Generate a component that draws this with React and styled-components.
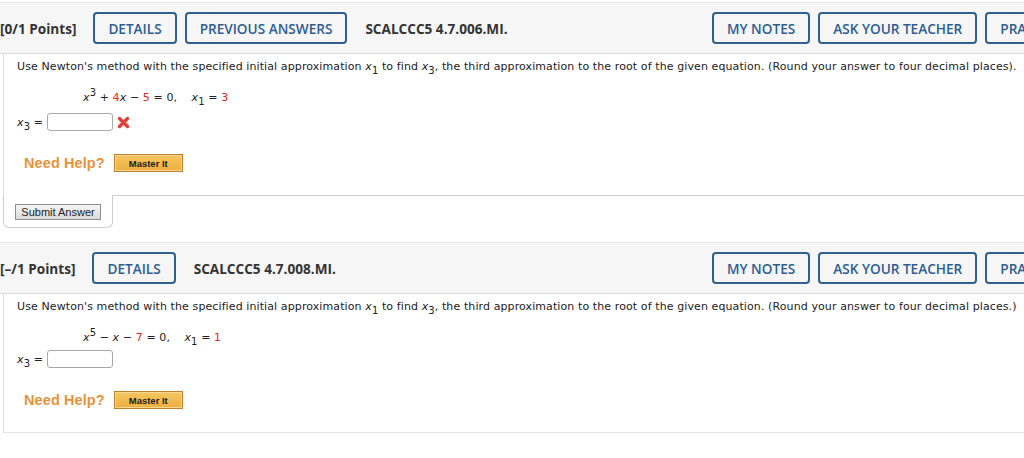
import styled, { createGlobalStyle } from "styled-components";

const GlobalStyle = createGlobalStyle`
  html, body {
    margin: 0;
    padding: 0;
    background: #fff;
    overflow: hidden;
  }
`;

const Page = styled.div`
  width: 1156px;
  padding-top: 2px;
`;

const Header = styled.div`
  display: flex;
  align-items: center;
  height: 50px;
  background: #f6f6f6;
  border-top: 1px solid #e8e8e8;
  border-bottom: 1px solid #dcdcdc;
  font-family: "Open Sans", "DejaVu Sans", sans-serif;
  gap: 8px;
  padding-right: 10px;
`;

const Points = styled.span`
  font-size: 13.6px;
  font-weight: 700;
  color: #333;
  margin-right: 9px;
  white-space: nowrap;
`;

const Title = styled.span`
  font-size: 13.6px;
  font-weight: 700;
  color: #333;
  margin-left: 10px;
  white-space: nowrap;
`;

const Spacer = styled.div`
  flex: 1;
`;

const HeaderButton = styled.button`
  height: 32px;
  padding: 0 13px;
  border: 2px solid #2f5f93;
  border-radius: 4px;
  background: transparent;
  color: #2d5d91;
  font-family: "Open Sans", "DejaVu Sans", sans-serif;
  font-size: 13.6px;
  font-weight: 600;
  white-space: nowrap;
`;

const Body = styled.div`
  margin-left: 3px;
  border-left: 1px solid #dedede;
  border-bottom: 1px solid ${({ $last }) => ($last ? "#e6e6e6" : "#cfcfcf")};
  padding: 5px 13px 22px;
  font-family: "DejaVu Sans", Verdana, sans-serif;
  font-size: 11px;
  letter-spacing: 0.1px;
  color: #222;
`;

const Prompt = styled.p`
  margin: 0;
  line-height: 16px;
  white-space: nowrap;
`;

const Equation = styled.div`
  margin-top: 14px;
  line-height: 18px;
  padding-left: 66px;
  white-space: nowrap;
`;

const V = styled.i`
  font-style: italic;
`;

const Sub = styled.sub`
  font-size: 10px;
  vertical-align: -4px;
  line-height: 0;
`;

const Sup = styled.sup`
  font-size: 10px;
  vertical-align: 5px;
  line-height: 0;
`;

const Red = styled.span`
  color: #e8251c;
`;

const AnswerRow = styled.div`
  display: flex;
  align-items: center;
  height: 20px;
  margin-top: ${({ $top }) => $top}px;
  gap: 4px;
`;

const Label = styled.span`
  white-space: nowrap;
`;

const AnswerInput = styled.input`
  width: 66px;
  height: 18px;
  box-sizing: border-box;
  border: 1px solid #a8a8a8;
  border-radius: 3px;
  background: #fff;
  margin: 0;
`;

const WrongMark = styled.svg`
  width: 13px;
  height: 13px;
`;

const HelpRow = styled.div`
  display: flex;
  align-items: center;
  height: 20px;
  margin-top: 21px;
  padding-left: 7px;
  gap: 9px;
`;

const NeedHelp = styled.span`
  font-family: "Liberation Sans", Arial, sans-serif;
  font-size: 14.5px;
  font-weight: 700;
  color: #e8923a;
  white-space: nowrap;
`;

const MasterButton = styled.button`
  width: 69px;
  height: 18px;
  padding: 0;
  border: 1px solid #c0812e;
  box-shadow: inset 0 0 0 1px #f8d88f;
  background: linear-gradient(#f6c762, #eeae3f);
  color: #1c1c1c;
  font-family: "Liberation Sans", Arial, sans-serif;
  font-size: 9.5px;
  font-weight: 700;
`;

const SubmitTab = styled.div`
  width: 86px;
  margin-left: 3px;
  margin-top: -1px;
  padding: 9px 11px 7px;
  background: #fff;
  border: 1px solid #cfcfcf;
  border-top: none;
  border-radius: 0 0 6px 6px;
`;

const SubmitButton = styled.button`
  width: 86px;
  height: 16px;
  padding: 0;
  border: 1px solid #8e8e8e;
  background: linear-gradient(#f6f6f6, #dadada);
  color: #222;
  font-family: "Liberation Sans", Arial, sans-serif;
  font-size: 11px;
  display: block;
`;

const Section = styled.section`
  margin-bottom: 14px;
`;

const Cross = () => (
  <WrongMark viewBox="0 0 13 13">
    <path
      d="M2.5 2.5 L10.5 10.5 M10.5 2.5 L2.5 10.5"
      stroke="#e2403b"
      strokeWidth="3.4"
      strokeLinecap="round"
    />
  </WrongMark>
);

const PromptText = ({ end }) => (
  <Prompt>
    Use Newton's method with the specified initial approximation <V>x</V>
    <Sub>1</Sub> to find <V>x</V>
    <Sub>3</Sub>, the third approximation to the root of the given equation.
    (Round your answer to four decimal places{end}
  </Prompt>
);

const QuestionHeader = ({ points, title, previous }) => (
  <Header>
    <Points>{points}</Points>
    <HeaderButton>DETAILS</HeaderButton>
    {previous && <HeaderButton>PREVIOUS ANSWERS</HeaderButton>}
    <Title>{title}</Title>
    <Spacer />
    <HeaderButton>MY NOTES</HeaderButton>
    <HeaderButton>ASK YOUR TEACHER</HeaderButton>
    <HeaderButton>PRACTICE ANOTHER</HeaderButton>
  </Header>
);

const HelpLine = () => (
  <HelpRow>
    <NeedHelp>Need Help?</NeedHelp>
    <MasterButton>Master It</MasterButton>
  </HelpRow>
);

export default function App() {
  return (
    <>
      <GlobalStyle />
      <Page>
        <Section>
          <QuestionHeader
            points="[0/1 Points]"
            title="SCALCCC5 4.7.006.MI."
            previous
          />
          <Body>
            <PromptText end=")." />
            <Equation>
              <V>x</V>
              <Sup>3</Sup> + <Red>4</Red>
              <V>x</V> − <Red>5</Red> = 0,&nbsp;&nbsp;&nbsp; <V>x</V>
              <Sub>1</Sub> = <Red>3</Red>
            </Equation>
            <AnswerRow $top={5}>
              <Label>
                <V>x</V>
                <Sub>3</Sub> =
              </Label>
              <AnswerInput type="text" />
              <Cross />
            </AnswerRow>
            <HelpLine />
          </Body>
          <SubmitTab>
            <SubmitButton>Submit Answer</SubmitButton>
          </SubmitTab>
        </Section>

        <Section>
          <QuestionHeader points="[–/1 Points]" title="SCALCCC5 4.7.008.MI." />
          <Body $last>
            <PromptText end=".)" />
            <Equation>
              <V>x</V>
              <Sup>5</Sup> − <V>x</V> − <Red>7</Red> = 0,&nbsp;&nbsp;&nbsp;{" "}
              <V>x</V>
              <Sub>1</Sub> = <Red>1</Red>
            </Equation>
            <AnswerRow $top={2}>
              <Label>
                <V>x</V>
                <Sub>3</Sub> =
              </Label>
              <AnswerInput type="text" />
            </AnswerRow>
            <HelpLine />
          </Body>
        </Section>
      </Page>
    </>
  );
}
